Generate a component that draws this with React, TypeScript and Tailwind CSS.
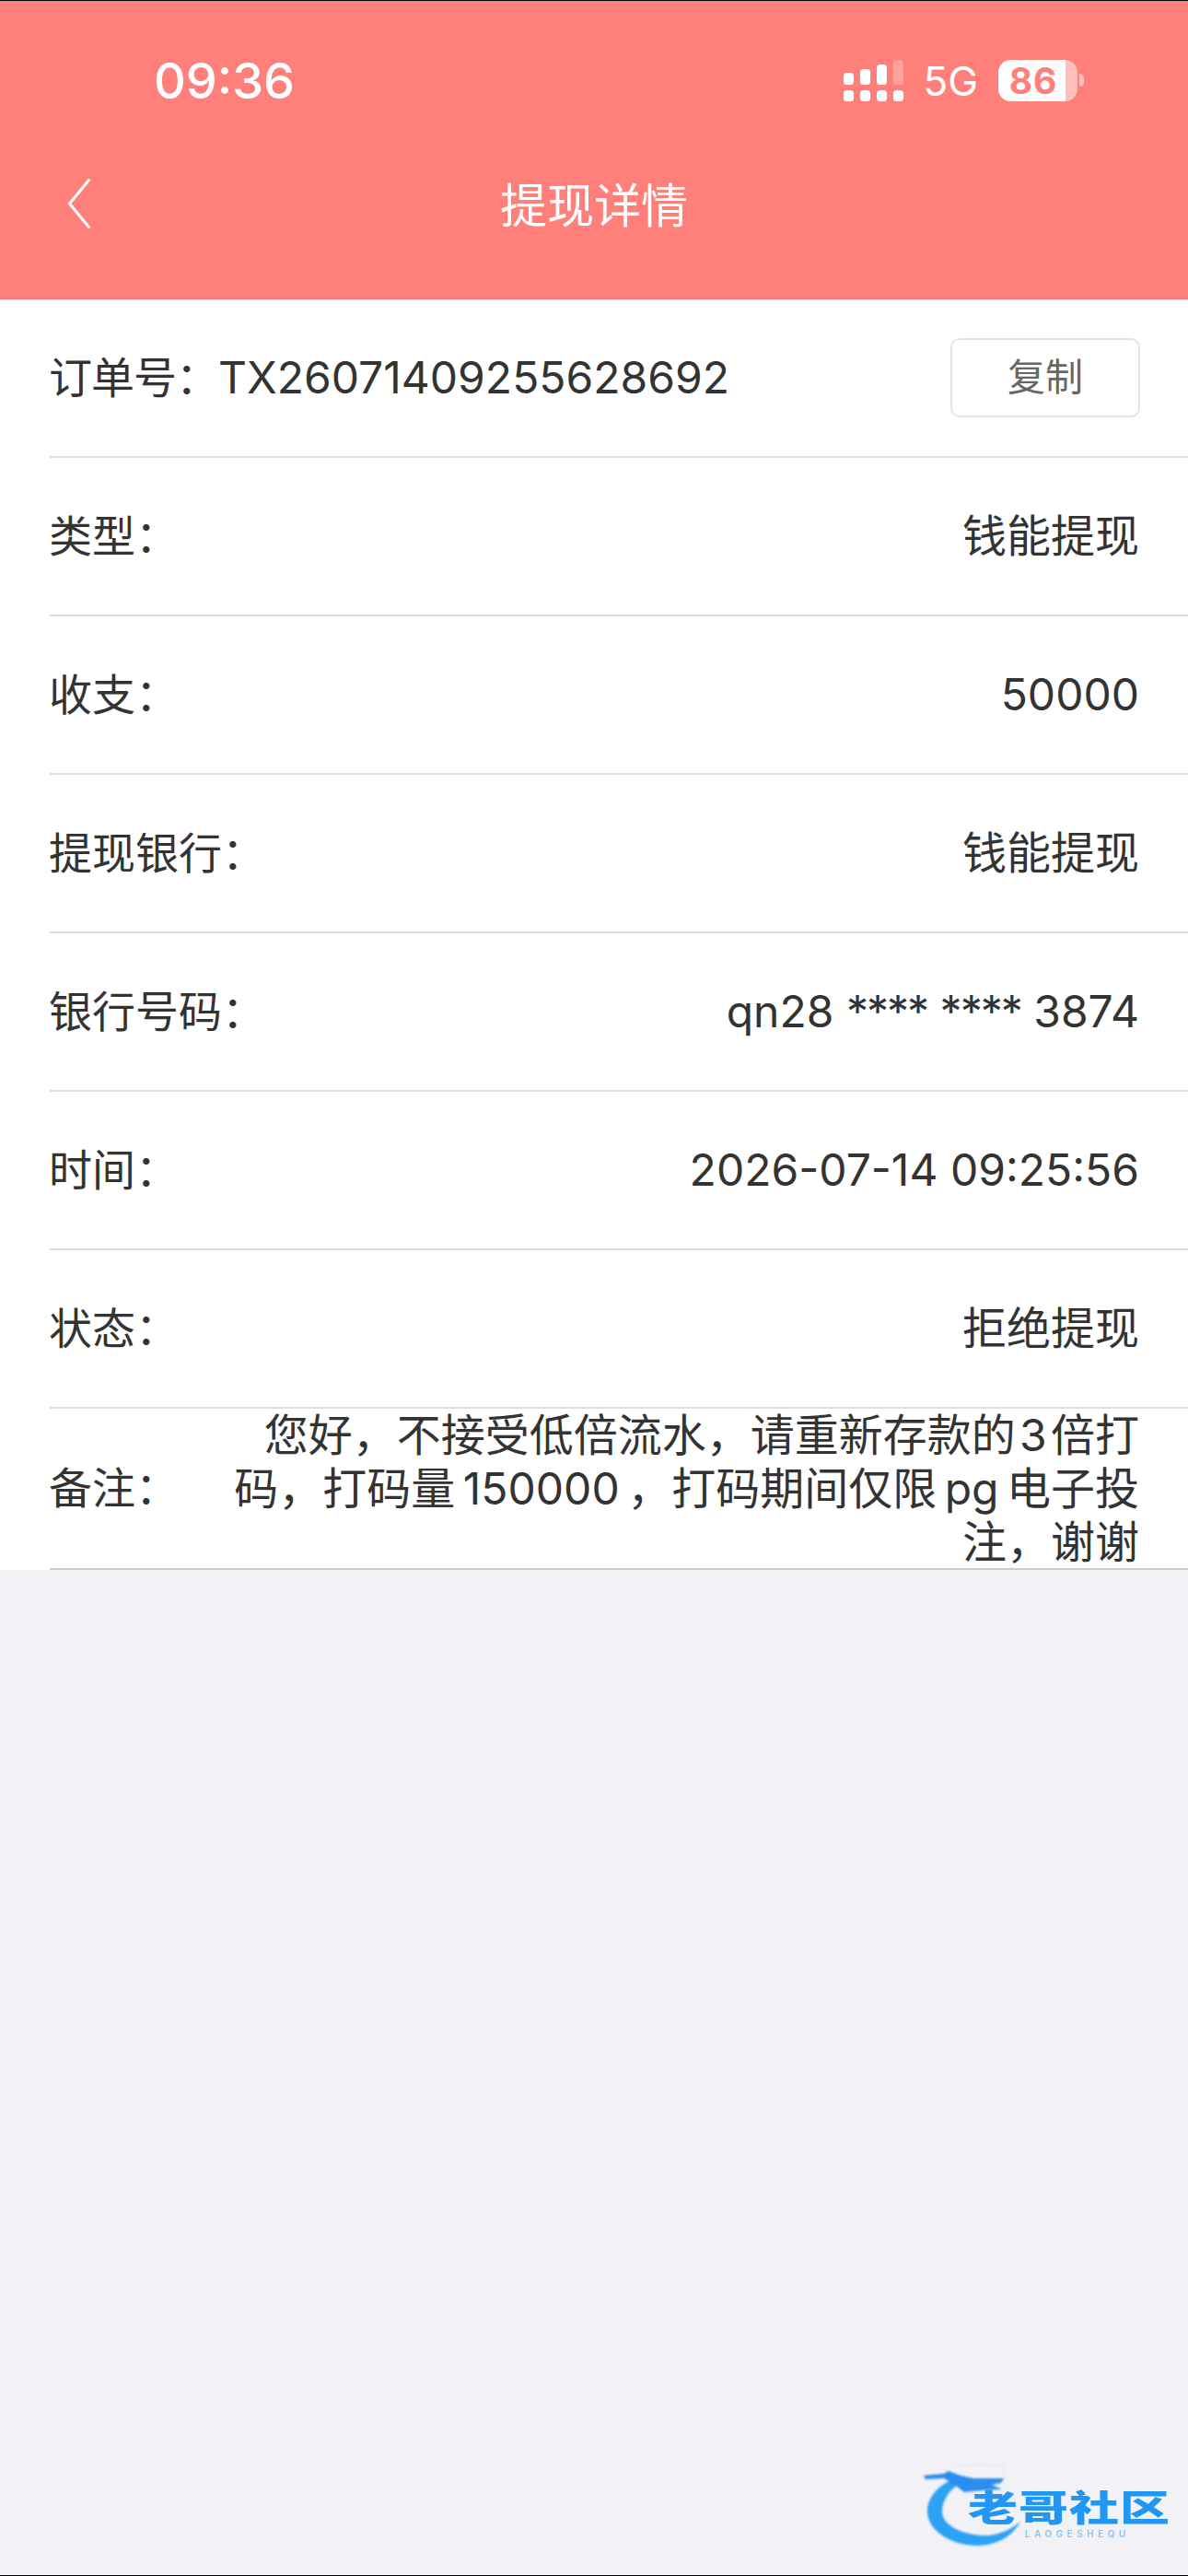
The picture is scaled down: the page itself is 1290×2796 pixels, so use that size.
const FONT = "font-['Inter','Noto_Sans_CJK_SC',sans-serif]";

const REMARK = '您好，不接受低倍流水，请重新存款的\u200a3\u200a倍打码，打码量 150000 ，打码期间仅限 pg 电子投注，谢谢';

const ROWS = [
  { label: '类型：', value: '钱能提现' },
  { label: '收支：', value: '50000' },
  { label: '提现银行：', value: '钱能提现' },
  { label: '银行号码：', value: <>qn28 <span className="tracking-[-2px]">****</span> <span className="tracking-[-2px]">****</span> 3874</> },
  { label: '时间：', value: '2026-07-14 09:25:56' },
  { label: '状态：', value: '拒绝提现' },
];

function Signal() {
  return (
    <svg width="66" height="45" viewBox="0 0 66 45" fill="#fff">
      <rect x="0" y="14" width="11" height="13" rx="3.5" />
      <rect x="18" y="10" width="11" height="17" rx="3.5" />
      <rect x="36" y="5" width="11" height="22" rx="3.5" />
      <rect x="54" y="0" width="11" height="27" rx="3.5" opacity="0.25" />
      <rect x="0" y="33" width="11" height="12" rx="3.5" />
      <rect x="18" y="33" width="11" height="12" rx="3.5" />
      <rect x="36" y="33" width="11" height="12" rx="3.5" />
      <rect x="54" y="33" width="11" height="12" rx="3.5" />
    </svg>
  );
}

function Battery() {
  return (
    <div className="flex items-center">
      <div className="flex h-[45px] w-[86px] overflow-hidden rounded-[14px] bg-white/50">
        <div className="flex h-full w-[73px] items-center justify-center bg-white">
          <span className="ml-[3px] text-[39px] leading-none font-bold tracking-[1px] text-[#ff807a]">86</span>
        </div>
      </div>
      <div className="ml-[2px] h-[14px] w-[5px] rounded-r-full bg-white/50" />
    </div>
  );
}

function Row({ label, value }: { label: string; value: React.ReactNode }) {
  return (
    <div className="ml-[54px] flex h-[172px] items-center justify-between border-b-2 border-[#dddddd] pr-[53px] text-[48px] text-[#333333]">
      <span className="-ml-px text-[47px]">{label}</span>
      <span>{value}</span>
    </div>
  );
}

function Logo() {
  return (
    <div className="absolute right-0 bottom-0 h-[155px] w-[310px]">
      <svg className="absolute top-0 left-0 blur-[1px]" width="150" height="130" viewBox="0 0 150 130">
        <path d="M55 37 C75 34 95 35 108 37 L110 45" fill="none" stroke="#dfe9f6" strokeWidth="1.5" />
        <path d="M58 50 C35 58 26 75 27 87 C28 108 55 123 80 123 C100 123 118 115 128 97 C115 108 100 113 85 112 C62 110 44 100 43 87 C43 72 52 62 63 55 Z" fill="#2ba2f4" />
        <path d="M23 47 L45 45 L50 42 L63 47 L77 50 L110 50 L107 55 L97 57 L108 62 L87 63 L67 65 L58 58 L45 50 L25 51 Z" fill="#2a8df0" />
      </svg>
      <span className="absolute top-[55px] left-[71px] origin-center scale-y-[0.72] text-[54px] leading-[54px] font-black tracking-[1px] whitespace-nowrap text-[#2196f3] blur-[0.6px]">老哥社区</span>
      <span className="absolute top-[104px] left-[133px] text-[10px] leading-[12px] font-semibold tracking-[4.5px] whitespace-nowrap text-[#8cc3f0] blur-[0.4px]">LAOGESHEQU</span>
    </div>
  );
}

export default function App() {
  return (
    <div className={`${FONT} flex h-[2796px] w-[1290px] flex-col overflow-hidden bg-[#f1f1f6]`}>
      <div className="h-px bg-black" />
      <header className="h-[324px] bg-[#ff807a] text-white">
        <div className="flex h-[172px] items-start justify-between pt-[59px] pr-[113px] pl-[167px]">
          <span className="text-[54px] leading-[56px] font-medium">09:36</span>
          <div className="mt-[4px] flex items-center">
            <Signal />
            <span className="mt-[2px] mr-[22px] ml-[20px] text-[44px] leading-none">5G</span>
            <Battery />
          </div>
        </div>
        <div className="relative flex h-[100px] items-center justify-center">
          <svg className="absolute top-[21px] left-[74px]" width="24" height="54" viewBox="0 0 24 54" fill="none" stroke="#fff" strokeWidth="3" strokeLinecap="round" strokeLinejoin="round">
            <path d="M22.5 1.5 L1.5 27 L22.5 52.5" />
          </svg>
          <span className="text-[51px] leading-none">提现详情</span>
        </div>
      </header>
      <main className="bg-white">
        <div className="ml-[54px] flex h-[172px] items-center justify-between border-b-2 border-[#dddddd] pr-[52px] text-[48px] text-[#333333]">
          <span className="-ml-px">
            <span className="text-[47px] tracking-[-1px]">订单号：</span>TX26071409255628692
          </span>
          <button className="h-[86px] w-[206px] rounded-[10px] border-2 border-[#e4e4e4] bg-white text-[41px] text-[#666666]">复制</button>
        </div>
        {ROWS.map((r) => (
          <Row key={r.label} label={r.label} value={r.value} />
        ))}
        <div className="ml-[54px] flex h-[175px] items-center justify-between border-b-2 border-[#cccccc] pr-[53px] text-[48px] text-[#333333]">
          <span className="-ml-px shrink-0 text-[47px]">备注：</span>
          <span className="w-[990px] text-right leading-[58px] [word-spacing:-5px]">{REMARK}</span>
        </div>
      </main>
      <div className="relative flex-1">
        <Logo />
      </div>
      <div className="h-px bg-black" />
    </div>
  );
}
